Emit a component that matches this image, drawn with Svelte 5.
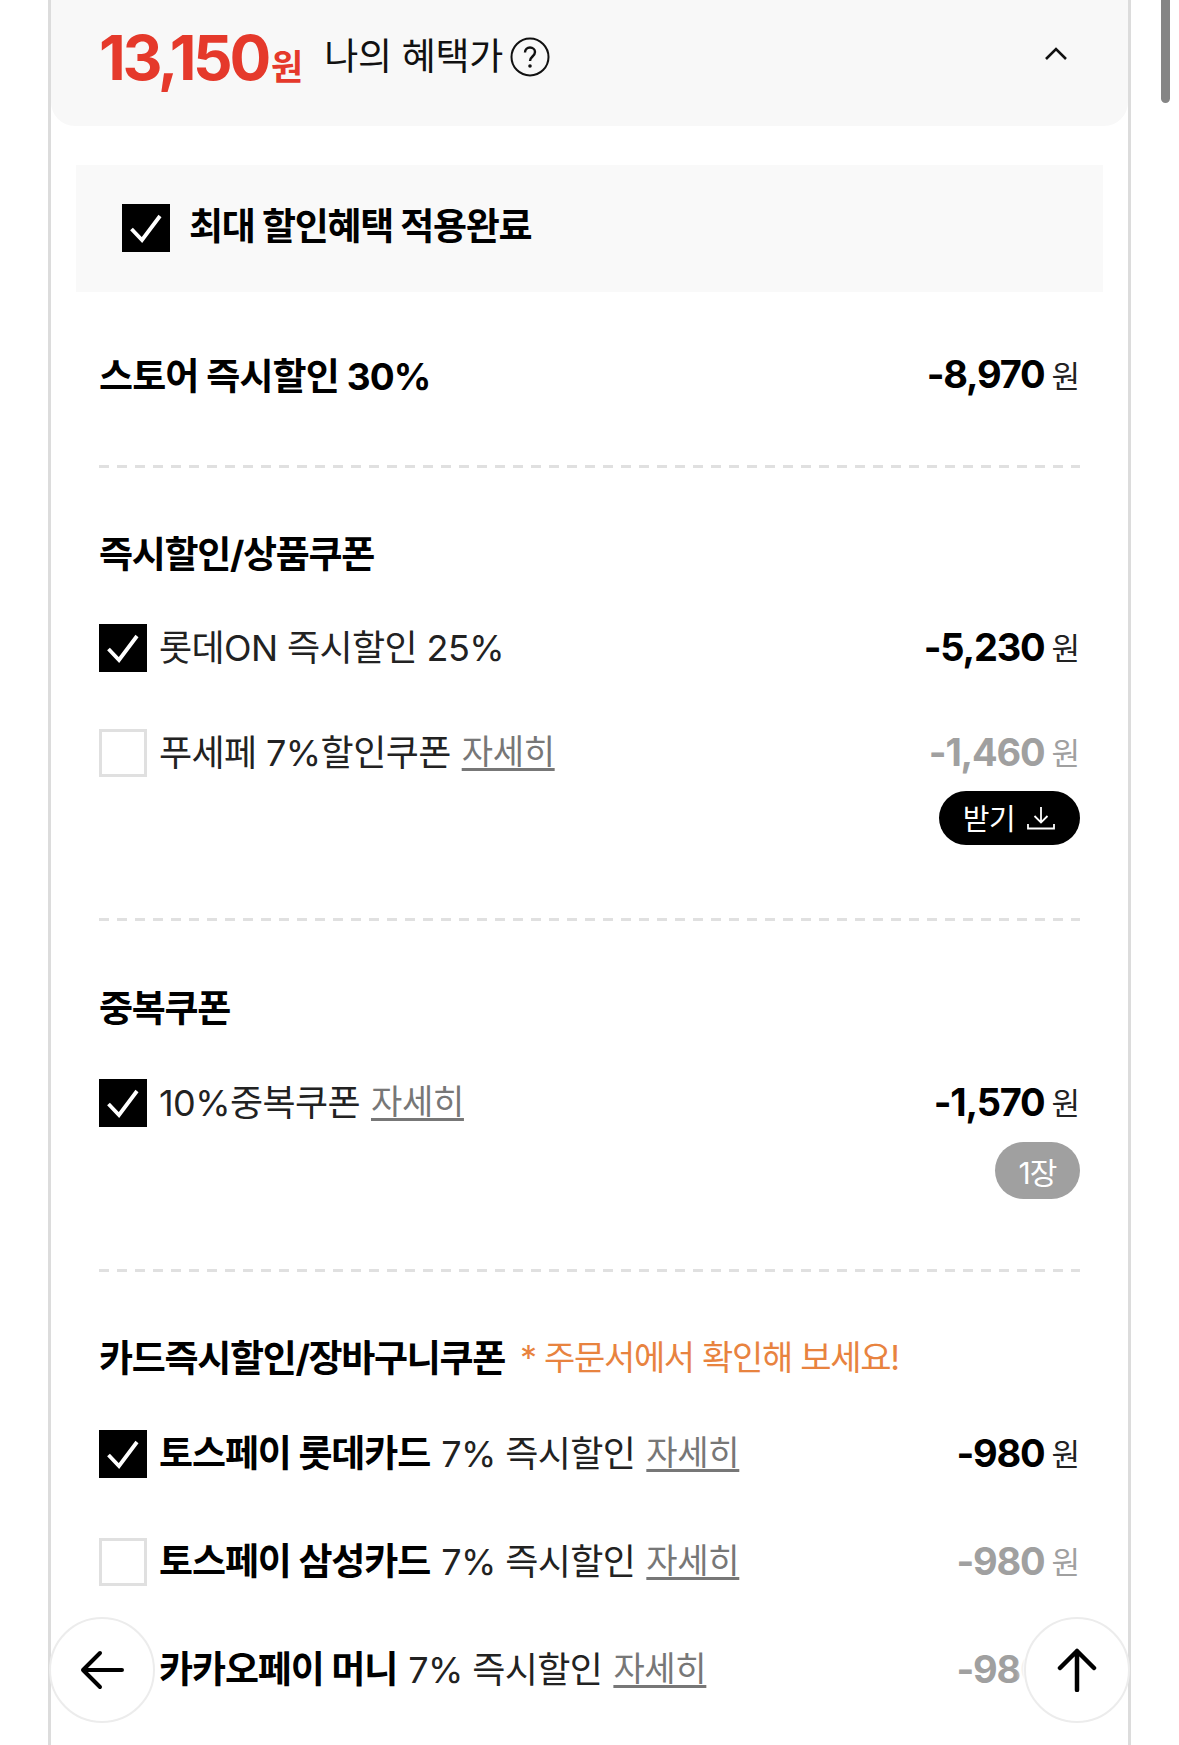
<script lang="ts">
	// one coupon line: check state, bold name, plain name, detail link, amount
	interface Coupon {
		checked: boolean;
		strong?: string;
		name: string;
		detail?: boolean;
		amount: string;
		tag?: 'get' | 'count';
	}

	const instant: Coupon[] = [
		{ checked: true, name: '롯데ON 즉시할인 25%', amount: '-5,230' },
		{ checked: false, name: '푸세페 7%할인쿠폰', detail: true, amount: '-1,460', tag: 'get' }
	];
	const dup: Coupon[] = [
		{ checked: true, name: '10%중복쿠폰', detail: true, amount: '-1,570', tag: 'count' }
	];
	const cards: Coupon[] = [
		{ checked: true, strong: '토스페이 롯데카드', name: '7% 즉시할인', detail: true, amount: '-980' },
		{ checked: false, strong: '토스페이 삼성카드', name: '7% 즉시할인', detail: true, amount: '-980' },
		{ checked: false, strong: '카카오페이 머니', name: '7% 즉시할인', detail: true, amount: '-980' }
	];
</script>

{#snippet box(checked: boolean)}
	<span class="box" class:on={checked}>
		{#if checked}
			<svg viewBox="0 0 48 48" width="48" height="48"><path d="M9.500 25L20 36L38 12" fill="none" stroke="#fff" stroke-width="3.800" /></svg>
		{/if}
	</span>
{/snippet}

{#snippet row(c: Coupon)}
	<div class="row">
		{@render box(c.checked)}
		<div class="name">
			{#if c.strong}<b>{c.strong}</b>{/if}
			<span>{c.name}</span>
			{#if c.detail}<a href="#top">자세히</a>{/if}
		</div>
		<div class="right" class:off={!c.checked}>
			<div class="price"><b>{c.amount}</b><span>원</span></div>
			{#if c.tag == 'get'}
				<div class="get">받기
					<svg viewBox="0 0 30 26" width="30" height="26"><path d="M15 2v15M8.500 11l6.500 6.500 6.500-6.500M2 19v4.500h26V19" fill="none" stroke="#fff" stroke-width="1.800" /></svg>
				</div>
			{:else if c.tag == 'count'}
				<div class="count">1장</div>
			{/if}
		</div>
	</div>
{/snippet}

<div class="page">
	<div class="frame">
		<header>
			<strong>13,150<small>원</small></strong>
			<span class="mine">나의 혜택가</span>
			<svg class="help" viewBox="0 0 40 40" width="40" height="40">
				<circle cx="20" cy="20" r="18.500" fill="none" stroke="#111" stroke-width="2" />
				<path d="M15 15.500c0-3 2.200-5 5-5s5 2 5 4.500c0 4.500-5 4.500-5 9" fill="none" stroke="#111" stroke-width="2.400" />
				<circle cx="20" cy="29" r="1.800" fill="#111" />
			</svg>
			<svg class="chev" viewBox="0 0 24 14" width="24" height="14"><path d="M2 12L12 2l10 10" fill="none" stroke="#111" stroke-width="2.600" /></svg>
		</header>

		<div class="banner">
			{@render box(true)}
			<b>최대 할인혜택 적용완료</b>
		</div>

		<div class="store dashed">
			<b class="title">스토어 즉시할인 30%</b>
			<div class="right"><div class="price"><b>-8,970</b><span>원</span></div></div>
		</div>

		<section class="instant dashed">
			<h3>즉시할인/상품쿠폰</h3>
			{#each instant as c}{@render row(c)}{/each}
		</section>

		<section class="dup dashed">
			<h3>중복쿠폰</h3>
			{#each dup as c}{@render row(c)}{/each}
		</section>

		<section class="cards">
			<h3>카드즉시할인/장바구니쿠폰 <em>* 주문서에서 확인해 보세요!</em></h3>
			{#each cards as c}{@render row(c)}{/each}
		</section>
	</div>

	<!-- floating page buttons -->
	<button class="fab left" aria-label="뒤로">
		<svg viewBox="0 0 44 40" width="44" height="40"><path d="M42 20H3M20 3L3 20l17 17" fill="none" stroke="#000" stroke-width="4" stroke-linecap="round" stroke-linejoin="round" /></svg>
	</button>
	<button class="fab up" aria-label="위로">
		<svg viewBox="0 0 40 44" width="40" height="44"><path d="M20 42V3M3 20L20 3l17 17" fill="none" stroke="#000" stroke-width="4.500" stroke-linecap="round" stroke-linejoin="round" /></svg>
	</button>
	<div class="scroll"></div>
</div>

<style>
	:global(body) {
		margin: 0;
		background: #fff;
	}

	.page {
		position: relative;
		width: 1179px;
		height: 1745px;
		overflow: hidden;
		font-family: Inter, "Noto Sans CJK KR", sans-serif;
		color: #000;
	}

	.frame {
		box-sizing: border-box;
		width: 1083px;
		height: 1745px;
		margin-left: 48px;
		border-left: 3px solid #dcdcdc;
		border-right: 3px solid #dcdcdc;
	}

	header {
		display: flex;
		align-items: center;
		height: 126px;
		box-sizing: border-box;
		padding: 0 48px 18px 48px;
		background: #f8f8f8;
		border-radius: 0 0 24px 24px;
	}

	header strong {
		font-size: 62px;
		font-weight: 700;
		letter-spacing: -3.300px;
		color: #e5392b;
		position: relative;
		top: 3px;
	}

	header small {
		font-size: 35px;
		margin-left: 3px;
		letter-spacing: 0;
	}

	.mine {
		margin-left: 21px;
		font-size: 37px;
		letter-spacing: -0.300px;
		color: #111;
	}

	.help {
		margin-left: 7px;
		margin-top: 6px;
	}

	.chev {
		margin-left: auto;
		margin-right: 12px;
	}

	.banner {
		display: flex;
		align-items: center;
		gap: 19px;
		height: 127px;
		margin: 39px 25px 0 25px;
		padding-left: 46px;
		background: #f9f9f9;
	}

	.banner b {
		font-size: 37px;
		letter-spacing: -1.300px;
		padding-bottom: 9px;
	}

	.banner .box {
		margin-bottom: 2px;
	}

	.box {
		flex: none;
		box-sizing: border-box;
		width: 48px;
		height: 48px;
		background: #fff;
		border: 3px solid #e0e0e0;
	}

	.box.on {
		background: #000;
		border: 0;
	}

	.box svg {
		display: block;
	}

	.dashed {
		background: repeating-linear-gradient(90deg, #e0e0e0 0 10px, transparent 10px 18px) bottom / 100% 3px no-repeat;
	}

	.store {
		display: flex;
		justify-content: space-between;
		align-items: center;
		margin: 0 48px;
		height: 176px;
	}

	.store .price {
		margin-bottom: 9px;
	}

	.title,
	h3 {
		margin: 0;
		font-size: 37px;
		font-weight: 700;
		white-space: nowrap;
	}

	.title {
		letter-spacing: -0.900px;
		padding-bottom: 13px;
	}

	section {
		margin: 0 48px;
	}

	h3 {
		display: flex;
		align-items: center;
		box-sizing: border-box;
		height: 50px;
		padding-bottom: 5px;
		letter-spacing: -1.300px;
	}

	h3 em {
		margin-left: 15px;
		font-style: normal;
		font-weight: 400;
		font-size: 34px;
		letter-spacing: -1.300px;
		color: #e8833f;
	}

	.instant {
		height: 453px;
		padding-top: 61px;
		box-sizing: border-box;
	}

	.dup {
		height: 351px;
		padding-top: 62px;
		box-sizing: border-box;
	}

	.cards {
		padding-top: 61px;
	}

	.instant h3 { margin-bottom: 45px; }
	.dup h3 { margin-bottom: 46px; }
	.cards h3 { margin-bottom: 47px; }

	.row {
		display: flex;
		align-items: flex-start;
		gap: 12px;
		margin-bottom: 57px;
		min-height: 48px;
	}

	.cards .row {
		margin-bottom: 60px;
	}

	.name {
		display: flex;
		align-items: center;
		gap: 11px;
		box-sizing: border-box;
		height: 48px;
		padding-bottom: 7px;
		font-size: 36px;
		letter-spacing: -0.600px;
		white-space: nowrap;
		color: #222;
	}

	.name b {
		color: #000;
		font-size: 37px;
		letter-spacing: -1.100px;
	}

	.name a {
		color: #777;
		font-size: 34px;
		letter-spacing: -0.300px;
		text-decoration: underline;
		text-underline-offset: 4px;
	}

	.right {
		margin-left: auto;
		display: flex;
		flex-direction: column;
		align-items: flex-end;
	}

	.price {
		display: flex;
		align-items: center;
		gap: 7px;
		box-sizing: border-box;
		height: 48px;
		padding-bottom: 3px;
	}

	.price b {
		font-size: 38px;
		letter-spacing: -1.200px;
	}

	.price span {
		font-size: 31px;
		color: #222;
	}

	.off .price b,
	.off .price span {
		color: #a0a0a0;
	}

	.get {
		display: flex;
		align-items: center;
		justify-content: center;
		gap: 11px;
		width: 141px;
		height: 54px;
		margin-top: 14px;
		border-radius: 27px;
		background: #000;
		color: #fff;
		font-size: 29px;
		letter-spacing: -0.500px;
		padding-bottom: 3px;
		box-sizing: border-box;
	}

	.get svg {
		margin-top: 3px;
	}

	.count {
		display: flex;
		align-items: center;
		justify-content: center;
		width: 85px;
		height: 57px;
		margin-top: 15px;
		border-radius: 29px;
		background: #a0a0a0;
		color: #fff;
		font-size: 30px;
		letter-spacing: -1px;
	}

	.fab {
		position: absolute;
		top: 1617px;
		display: flex;
		align-items: center;
		justify-content: center;
		box-sizing: border-box;
		width: 106px;
		height: 106px;
		padding: 0;
		border: 2px solid #ececec;
		border-radius: 50%;
		background: #fff;
	}

	.fab.left { left: 49px; }
	.fab.up {
		left: 1024px;
		box-shadow: -4px 0 4px #fff;
	}

	.scroll {
		position: absolute;
		top: -10px;
		left: 1161px;
		width: 9px;
		height: 113px;
		border-radius: 5px;
		background: #858585;
	}
</style>
